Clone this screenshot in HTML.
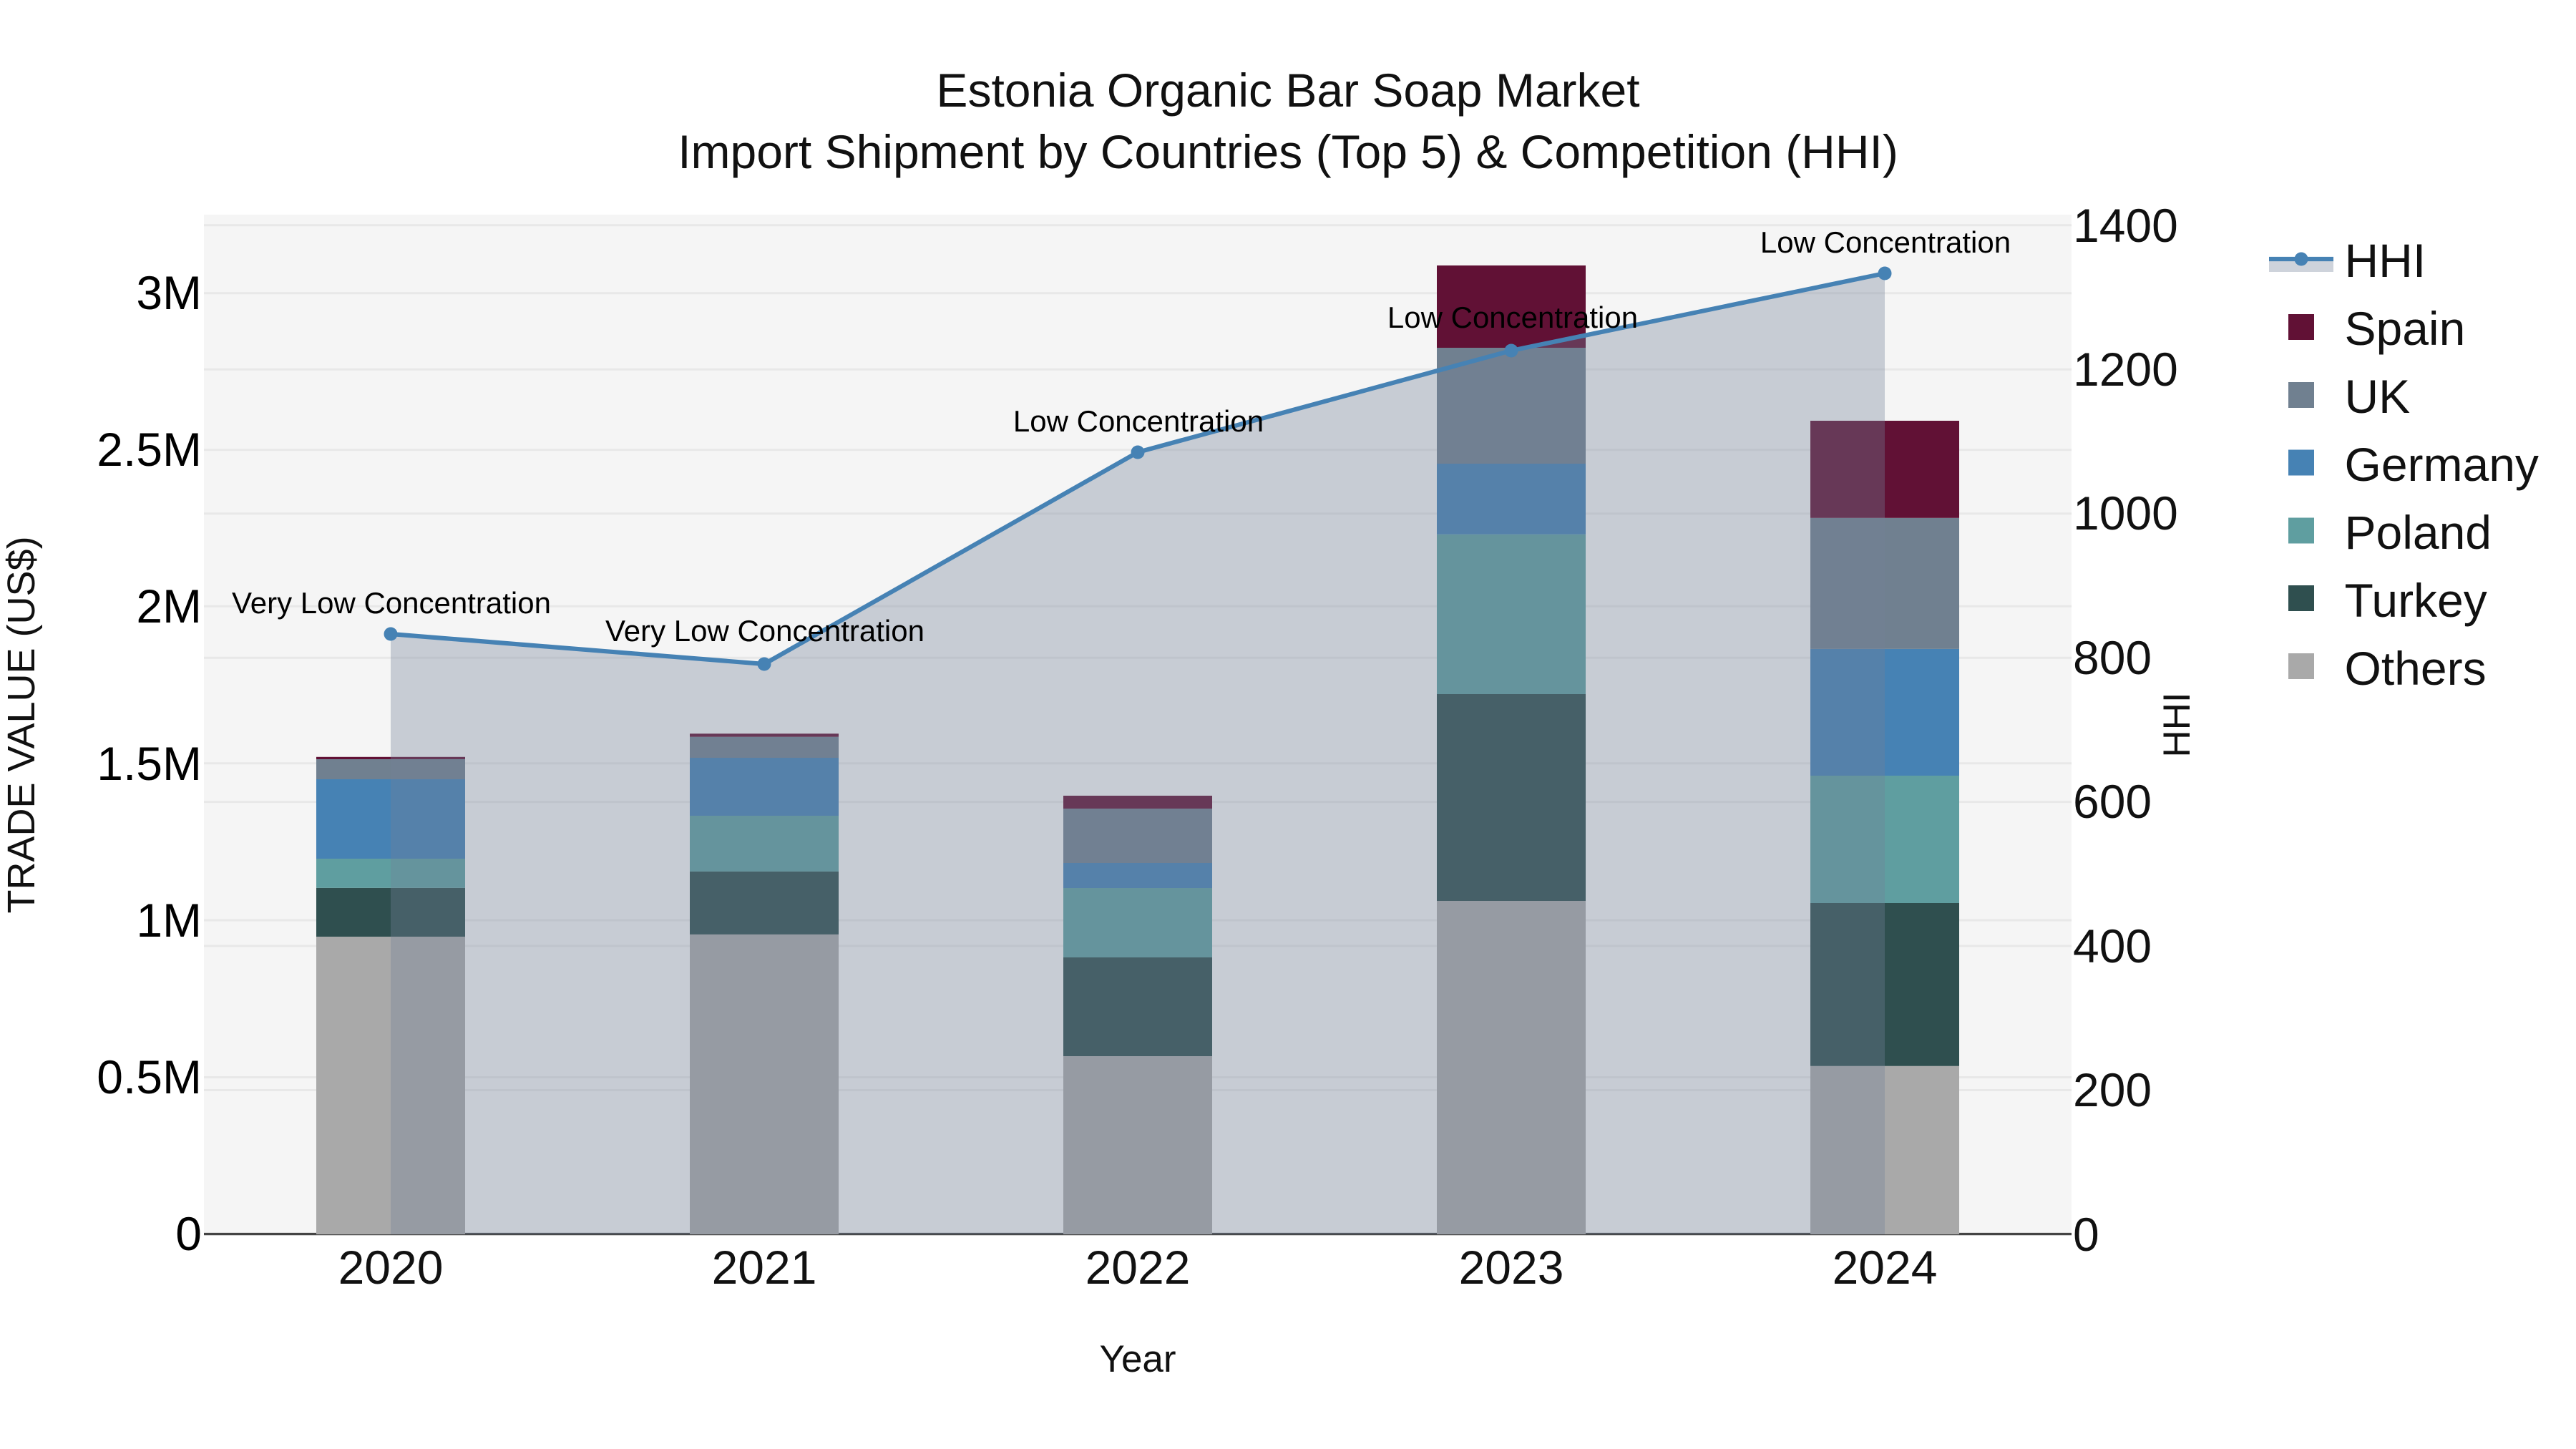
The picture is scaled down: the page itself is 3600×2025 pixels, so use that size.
<!DOCTYPE html>
<html>
<head>
<meta charset="utf-8">
<title>Estonia Organic Bar Soap Market</title>
<style>
html,body{margin:0;padding:0;background:#fff;width:3600px;height:2025px;overflow:hidden}
svg{display:block}
text{font-family:"Liberation Sans",Arial,sans-serif}
.t{font-size:66px;fill:#111}
.a{font-size:42px;fill:#000;text-anchor:middle}
.l{font-size:66px;fill:#111}
</style>
</head>
<body>
<svg xmlns="http://www.w3.org/2000/svg" width="3600" height="2025" viewBox="0 0 3600 2025">
<rect width="3600" height="2025" fill="#fff"/>
<rect x="285" y="300" width="2610" height="1425" fill="#f5f5f5"/>
<g stroke="#e8e8e8" stroke-width="3" fill="none">
<path d="M285 1505.5H2895M285 1286H2895M285 1066.7H2895M285 847.3H2895M285 628.6H2895M285 409.8H2895"/>
<path d="M285 1523.5H2895M285 1322H2895M285 1120.6H2895M285 919.2H2895M285 717.7H2895M285 516.2H2895M285 314.7H2895"/>
</g>
<path d="M285 1724.6H2895" stroke="#444" stroke-width="3.4" fill="none"/>

<!-- 2020 -->
<g>
<rect x="442" y="1309" width="208" height="416" fill="#a9a9a9"/>
<rect x="442" y="1240.8" width="208" height="68.2" fill="#2f4f4f"/>
<rect x="442" y="1200" width="208" height="40.8" fill="#5f9ea0"/>
<rect x="442" y="1089" width="208" height="111" fill="#4682b4"/>
<rect x="442" y="1061" width="208" height="28" fill="#708090"/>
<rect x="442" y="1057.8" width="208" height="3.2" fill="#611135"/>
</g>
<!-- 2021 -->
<g>
<rect x="964" y="1305.9" width="208" height="419.1" fill="#a9a9a9"/>
<rect x="964" y="1217.9" width="208" height="88" fill="#2f4f4f"/>
<rect x="964" y="1140" width="208" height="77.9" fill="#5f9ea0"/>
<rect x="964" y="1059" width="208" height="81" fill="#4682b4"/>
<rect x="964" y="1029.7" width="208" height="29.3" fill="#708090"/>
<rect x="964" y="1025.3" width="208" height="4.4" fill="#611135"/>
</g>
<!-- 2022 -->
<g>
<rect x="1486" y="1476" width="208" height="249" fill="#a9a9a9"/>
<rect x="1486" y="1338" width="208" height="138" fill="#2f4f4f"/>
<rect x="1486" y="1241" width="208" height="97" fill="#5f9ea0"/>
<rect x="1486" y="1206" width="208" height="35" fill="#4682b4"/>
<rect x="1486" y="1130" width="208" height="76" fill="#708090"/>
<rect x="1486" y="1112" width="208" height="18" fill="#611135"/>
</g>
<!-- 2023 -->
<g>
<rect x="2008" y="1259" width="208" height="466" fill="#a9a9a9"/>
<rect x="2008" y="970" width="208" height="289" fill="#2f4f4f"/>
<rect x="2008" y="746.8" width="208" height="223.2" fill="#5f9ea0"/>
<rect x="2008" y="648" width="208" height="98.8" fill="#4682b4"/>
<rect x="2008" y="486" width="208" height="162" fill="#708090"/>
<rect x="2008" y="371" width="208" height="115" fill="#611135"/>
</g>
<!-- 2024 -->
<g>
<rect x="2530" y="1489.8" width="208" height="235.2" fill="#a9a9a9"/>
<rect x="2530" y="1262" width="208" height="227.8" fill="#2f4f4f"/>
<rect x="2530" y="1084" width="208" height="178" fill="#5f9ea0"/>
<rect x="2530" y="906.9" width="208" height="177.1" fill="#4682b4"/>
<rect x="2530" y="723.8" width="208" height="183.1" fill="#708090"/>
<rect x="2530" y="588" width="208" height="135.8" fill="#611135"/>
</g>

<!-- HHI area -->
<path d="M546 886L1068 928L1590 632L2112 490L2634 382V1725H546Z" fill="rgba(116,128,151,0.35)"/>
<path d="M546 886L1068 928L1590 632L2112 490L2634 382" fill="none" stroke="#4682b4" stroke-width="6.2" stroke-linejoin="round"/>
<g fill="#4682b4">
<circle cx="546" cy="886" r="9.5"/><circle cx="1068" cy="928" r="9.5"/><circle cx="1590" cy="632" r="9.5"/><circle cx="2112" cy="490" r="9.5"/><circle cx="2634" cy="382" r="9.5"/>
</g>

<!-- annotations -->
<text class="a" x="547" y="857">Very Low Concentration</text>
<text class="a" x="1069" y="896">Very Low Concentration</text>
<text class="a" x="1591" y="603">Low Concentration</text>
<text class="a" x="2114" y="458">Low Concentration</text>
<text class="a" x="2635" y="353">Low Concentration</text>

<!-- title -->
<text x="1800" y="149" font-size="66" fill="#111" text-anchor="middle">Estonia Organic Bar Soap Market</text>
<text x="1800" y="235" font-size="66" fill="#111" text-anchor="middle">Import Shipment by Countries (Top 5) &amp; Competition (HHI)</text>

<!-- left ticks -->
<g class="t" text-anchor="end" style="fill:#000">
<text class="t" x="282" y="432" style="fill:#000">3M</text>
<text class="t" x="282" y="651" style="fill:#000">2.5M</text>
<text class="t" x="282" y="870" style="fill:#000">2M</text>
<text class="t" x="282" y="1090" style="fill:#000">1.5M</text>
<text class="t" x="282" y="1309" style="fill:#000">1M</text>
<text class="t" x="282" y="1528" style="fill:#000">0.5M</text>
<text class="t" x="282" y="1747" style="fill:#000">0</text>
</g>

<!-- right ticks -->
<text class="t" x="2897" y="338">1400</text>
<text class="t" x="2897" y="539">1200</text>
<text class="t" x="2897" y="740">1000</text>
<text class="t" x="2897" y="942">800</text>
<text class="t" x="2897" y="1143">600</text>
<text class="t" x="2897" y="1345">400</text>
<text class="t" x="2897" y="1546">200</text>
<text class="t" x="2897" y="1748">0</text>

<!-- x ticks -->
<g text-anchor="middle">
<text class="t" x="546" y="1794">2020</text>
<text class="t" x="1068" y="1794">2021</text>
<text class="t" x="1590" y="1794">2022</text>
<text class="t" x="2112" y="1794">2023</text>
<text class="t" x="2634" y="1794">2024</text>
</g>

<!-- axis titles -->
<text x="1590" y="1917" font-size="53" fill="#111" text-anchor="middle">Year</text>
<text transform="translate(48 1013) rotate(-90)" font-size="54" fill="#111" text-anchor="middle">TRADE VALUE (US$)</text>
<text transform="translate(3060 1013) rotate(-90)" font-size="53" fill="#111" text-anchor="middle">HHI</text>

<!-- legend -->
<rect x="3171" y="362" width="90" height="18" fill="rgba(116,128,151,0.35)"/>
<path d="M3171 362H3261" stroke="#4682b4" stroke-width="6.2" fill="none"/>
<circle cx="3216" cy="362" r="9.5" fill="#4682b4"/>
<rect x="3198" y="439" width="36" height="36" fill="#611135"/>
<rect x="3198" y="534" width="36" height="36" fill="#708090"/>
<rect x="3198" y="628.5" width="36" height="36" fill="#4682b4"/>
<rect x="3198" y="723.5" width="36" height="36" fill="#5f9ea0"/>
<rect x="3198" y="818" width="36" height="36" fill="#2f4f4f"/>
<rect x="3198" y="913" width="36" height="36" fill="#a9a9a9"/>
<text class="l" x="3276.5" y="387">HHI</text>
<text class="l" x="3276.5" y="482">Spain</text>
<text class="l" x="3276.5" y="577">UK</text>
<text class="l" x="3276.5" y="672">Germany</text>
<text class="l" x="3276.5" y="767">Poland</text>
<text class="l" x="3276.5" y="862">Turkey</text>
<text class="l" x="3276.5" y="957">Others</text>
</svg>
</body>
</html>
